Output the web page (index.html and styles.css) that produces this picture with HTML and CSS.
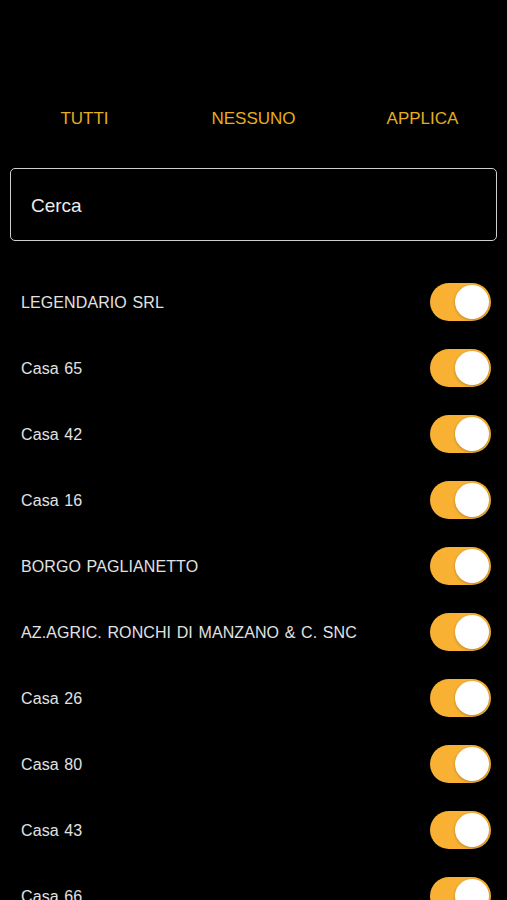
FILE: index.html
```html
<!doctype html>
<html lang="it">
<head>
<meta charset="UTF-8">
<title>Filtro case</title>
<meta name="viewport" content="width=device-width,initial-scale=1">
<link rel="stylesheet" href="styles.css">
</head>
<body>

<div class="actions">
  <button class="action">TUTTI</button>
  <button class="action">NESSUNO</button>
  <button class="action">APPLICA</button>
</div>

<div class="search">
  <input type="text" class="search-input" placeholder="Cerca">
</div>

<ul class="list">
  <li class="row"><span class="name">LEGENDARIO SRL</span><span class="toggle"><span class="knob"></span></span></li>
  <li class="row"><span class="name">Casa 65</span><span class="toggle"><span class="knob"></span></span></li>
  <li class="row"><span class="name">Casa 42</span><span class="toggle"><span class="knob"></span></span></li>
  <li class="row"><span class="name">Casa 16</span><span class="toggle"><span class="knob"></span></span></li>
  <li class="row"><span class="name">BORGO PAGLIANETTO</span><span class="toggle"><span class="knob"></span></span></li>
  <li class="row"><span class="name">AZ.AGRIC. RONCHI DI MANZANO &amp; C. SNC</span><span class="toggle"><span class="knob"></span></span></li>
  <li class="row"><span class="name">Casa 26</span><span class="toggle"><span class="knob"></span></span></li>
  <li class="row"><span class="name">Casa 80</span><span class="toggle"><span class="knob"></span></span></li>
  <li class="row"><span class="name">Casa 43</span><span class="toggle"><span class="knob"></span></span></li>
  <li class="row"><span class="name">Casa 66</span><span class="toggle"><span class="knob"></span></span></li>
</ul>

</body>
</html>
```

FILE: styles.css
```css
html, body {
    margin: 0;
    padding: 0;
    background: #000;
    height: 900px;
    overflow: hidden;
}
body {
    font-family: "Liberation Sans", Arial, sans-serif;
    color: #e2e2e2;
}

/* top buttons */
.actions {
    display: grid;
    grid-template-columns: 1fr 1fr 1fr;
    padding-top: 96px;
}
.action {
    height: 44px;
    padding: 2px 0 0 0;
    background: none;
    border: none;
    color: #e6ae1f;
    font-family: inherit;
    font-size: 17px;
}

/* search box */
.search {
    padding: 28px 10px 0 10px;
}
.search-input {
    display: block;
    box-sizing: border-box;
    width: 100%;
    height: 73px;
    background: #000;
    border: 1.5px solid #cfcfcf;
    border-radius: 5px;
    padding: 2px 20px 0 20px;
    font-family: inherit;
    font-size: 19px;
    color: #eee;
    outline: none;
}
.search-input::placeholder {
    color: #ececec;
}

/* list */
.list {
    list-style: none;
    margin: 28px 0 0 0;
    padding: 0;
}
.row {
    display: flex;
    align-items: center;
    justify-content: space-between;
    height: 66px;
    padding: 0 16px 0 21px;
}
.name {
    padding-top: 2px;
    font-size: 16px;
    letter-spacing: 0.1px;
    word-spacing: 1px;
}
.toggle {
    display: flex;
    justify-content: flex-end;
    align-items: center;
    box-sizing: border-box;
    width: 61px;
    height: 38px;
    padding: 2px;
    border-radius: 19px;
    background: #f8b133;
}
.knob {
    width: 34px;
    height: 34px;
    border-radius: 50%;
    background: #fff;
    box-shadow: 0 1px 3px rgba(0, 0, 0, 0.25);
}
```
